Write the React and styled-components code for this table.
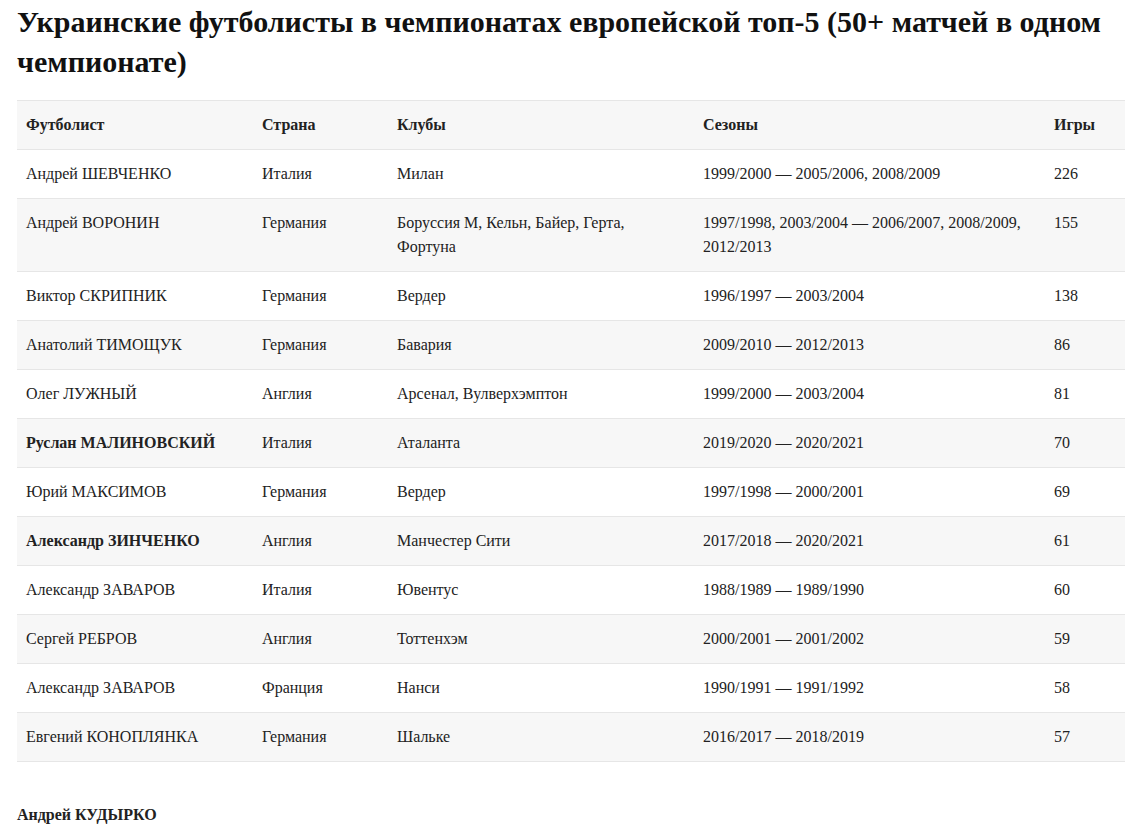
import React from 'react';
import styled, {createGlobalStyle} from 'styled-components';

const GlobalStyle = createGlobalStyle`
  body {
    margin: 0;
    background: #ffffff;
    font-family: "Liberation Serif", "Times New Roman", serif;
    color: #222222;
  }
`;

const Page = styled.div`
  padding: 2px 7px 0 17px;
`;

const Title = styled.h1`
  margin: 0 0 18px;
  font-size: 30px;
  line-height: 40px;
  font-weight: 700;
  color: #111111;
`;

const Table = styled.table`
  width: 1108px;
  table-layout: fixed;
  border-collapse: collapse;
  font-size: 16px;
  line-height: 24px;
`;

const HeadCell = styled.th`
  box-sizing: border-box;
  text-align: left;
  font-weight: 700;
  padding: 12px 9px;
  width: ${p => p.$w}px;
  background: #f7f7f7;
  border-top: 1px solid #e6e6e6;
  border-bottom: 1px solid #e6e6e6;
`;

const Row = styled.tr`
  background: ${p => (p.$odd ? '#f7f7f7' : '#ffffff')};
  border-bottom: 1px solid #e6e6e6;
`;

const Cell = styled.td`
  padding: 12px 9px;
  vertical-align: top;
  font-weight: ${p => (p.$bold ? 700 : 400)};
`;

const Author = styled.p`
  margin: 41px 0 0;
  font-size: 16px;
  line-height: 24px;
  font-weight: 700;
`;

const columns = [
    {title: 'Футболист', w: 236},
    {title: 'Страна', w: 135},
    {title: 'Клубы', w: 306},
    {title: 'Сезоны', w: 351},
    {title: 'Игры', w: 80},
];

const rows = [
    ['Андрей ШЕВЧЕНКО', 'Италия', 'Милан', '1999/2000 — 2005/2006, 2008/2009', '226'],
    ['Андрей ВОРОНИН', 'Германия', 'Боруссия М, Кельн, Байер, Герта, Фортуна', '1997/1998, 2003/2004 — 2006/2007, 2008/2009, 2012/2013', '155'],
    ['Виктор СКРИПНИК', 'Германия', 'Вердер', '1996/1997 — 2003/2004', '138'],
    ['Анатолий ТИМОЩУК', 'Германия', 'Бавария', '2009/2010 — 2012/2013', '86'],
    ['Олег ЛУЖНЫЙ', 'Англия', 'Арсенал, Вулверхэмптон', '1999/2000 — 2003/2004', '81'],
    ['Руслан МАЛИНОВСКИЙ', 'Италия', 'Аталанта', '2019/2020 — 2020/2021', '70', true],
    ['Юрий МАКСИМОВ', 'Германия', 'Вердер', '1997/1998 — 2000/2001', '69'],
    ['Александр ЗИНЧЕНКО', 'Англия', 'Манчестер Сити', '2017/2018 — 2020/2021', '61', true],
    ['Александр ЗАВАРОВ', 'Италия', 'Ювентус', '1988/1989 — 1989/1990', '60'],
    ['Сергей РЕБРОВ', 'Англия', 'Тоттенхэм', '2000/2001 — 2001/2002', '59'],
    ['Александр ЗАВАРОВ', 'Франция', 'Нанси', '1990/1991 — 1991/1992', '58'],
    ['Евгений КОНОПЛЯНКА', 'Германия', 'Шальке', '2016/2017 — 2018/2019', '57'],
];

const App = () => {
    return (
        <Page>
            <GlobalStyle/>
            <Title>
                Украинские футболисты в чемпионатах европейской топ-5 (50+ матчей в одном чемпионате)
            </Title>
            <Table>
                <thead>
                    <tr>
                        {columns.map(c => (
                            <HeadCell key={c.title} $w={c.w}>{c.title}</HeadCell>
                        ))}
                    </tr>
                </thead>
                <tbody>
                    {rows.map((r, i) => (
                        <Row key={i} $odd={i % 2 === 1}>
                            <Cell $bold={r[5]}>{r[0]}</Cell>
                            <Cell>{r[1]}</Cell>
                            <Cell>{r[2]}</Cell>
                            <Cell>{r[3]}</Cell>
                            <Cell>{r[4]}</Cell>
                        </Row>
                    ))}
                </tbody>
            </Table>
            <Author>Андрей КУДЫРКО</Author>
        </Page>
    );
};

export default App;
